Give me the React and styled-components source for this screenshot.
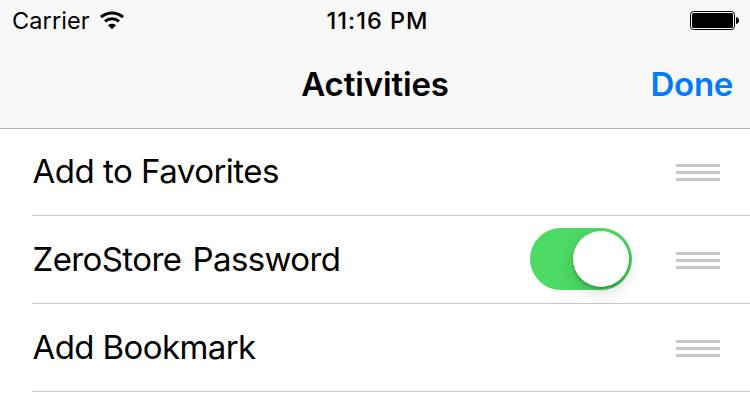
import React from 'react';
import styled, { createGlobalStyle } from 'styled-components';

const GlobalStyle = createGlobalStyle`
  * { box-sizing: border-box; }
  body { margin: 0; background: #fff; color: #000; font-family: Inter, "Liberation Sans", sans-serif; }
`;

const Screen = styled.main`
  width: 750px;
  height: 402px;
  overflow: hidden;
  background: #fff;
`;

const Header = styled.header`
  height: 129px;
  background: #f8f8f8;
  border-bottom: 1px solid #b2b2b2;
`;

const StatusBar = styled.div`
  height: 40px;
  padding: 0 11px 0 12px;
  display: grid;
  grid-template-columns: 1fr auto 1fr;
  align-items: center;
`;

const Carrier = styled.div`
  display: flex;
  align-items: center;
  gap: 9px;
`;

const Label = styled.span`
  display: block;
  white-space: nowrap;
  font-size: ${(p) => p.$size}px;
  font-weight: ${(p) => p.$weight || 400};
  letter-spacing: ${(p) => p.$spacing || 0}px;
  line-height: 42px;
  color: ${(p) => p.$color || '#000'};
`;

const Clock = styled(Label)`
  padding-left: 4px;
`;

const StatusIcon = styled.svg`
  display: block;
  justify-self: end;
  margin-bottom: 1px;
`;

const NavBar = styled.nav`
  height: 88px;
  padding: 0 17px;
  display: grid;
  grid-template-columns: 1fr auto 1fr;
  align-items: center;
`;

const DoneButton = styled.button`
  justify-self: end;
  padding: 0;
  border: 0;
  background: none;
  font-family: inherit;
`;

const List = styled.ul`
  margin: 0;
  padding: 0 0 0 32px;
  list-style: none;
`;

const Row = styled.li`
  height: ${(p) => p.$height}px;
  padding: 0 30px 0 0.5px;
  display: flex;
  align-items: flex-end;
  border-bottom: 1px solid #c8c7cc;
`;

const RowLabel = styled(Label)`
  margin-bottom: 23px;
  word-spacing: ${(p) => p.$wordSpacing || 0}px;
`;

const Switch = styled.button`
  width: 102px;
  height: 62px;
  margin: 0 0 13px auto;
  padding: 3px;
  display: flex;
  justify-content: flex-end;
  border: 0;
  border-radius: 31px;
  background: #4cd964;
`;

const Knob = styled.span`
  width: 56px;
  height: 56px;
  border-radius: 50%;
  background: #fff;
  box-shadow: 0 6px 16px rgba(0, 0, 0, 0.15), 0 2px 3px rgba(0, 0, 0, 0.25);
`;

const Handle = styled.div`
  width: 44px;
  margin-bottom: 34px;
  margin-left: ${(p) => (p.$afterSwitch ? '44px' : 'auto')};
  display: flex;
  flex-direction: column;
  gap: 4px;
`;

const HandleBar = styled.span`
  height: 3px;
  background: #c7c7cc;
`;

const rows = [
  { label: 'Add to Favorites', height: 87, spacing: -0.5 },
  { label: 'ZeroStore Password', height: 88, spacing: -0.6, wordSpacing: 2.5, enabled: true },
  { label: 'Add Bookmark', height: 88, spacing: -0.6 },
];

export default function App() {
  return (
    <Screen>
      <GlobalStyle />
      <Header>
        <StatusBar>
          <Carrier>
            <Label $size={23.5} $spacing={0.1}>Carrier</Label>
            <StatusIcon width="26" height="19" viewBox="0 0 26 19" aria-label="Wi-Fi">
              <path d="M2 6.1C8.2.5 17.8.5 24 6.1M6 10.4c4-3.6 10-3.6 14 0" fill="none" stroke="#000" strokeWidth="3" />
              <path d="M13 18.2l-4-4c2.3-2 5.7-2 8 0z" />
            </StatusIcon>
          </Carrier>
          <Clock $size={23.5} $weight={550} $spacing={1}>11:16 PM</Clock>
          <StatusIcon width="49" height="19" viewBox="0 0 49 19" aria-label="Battery full">
            <rect x=".5" y=".5" width="44" height="18" rx="3" fill="none" stroke="#000" />
            <rect x="2" y="2" width="41" height="15" rx="1.5" />
            <path d="M46 6c4 .5 4 6.5 0 7z" />
          </StatusIcon>
        </StatusBar>
        <NavBar>
          <span />
          <Label $size={33} $weight={600} $spacing={-0.15}>Activities</Label>
          <DoneButton><Label $size={33} $weight={600} $spacing={-0.3} $color="#007aff">Done</Label></DoneButton>
        </NavBar>
      </Header>
      <List>
        {rows.map((row) => (
          <Row key={row.label} $height={row.height}>
            <RowLabel $size={33} $spacing={row.spacing} $wordSpacing={row.wordSpacing}>{row.label}</RowLabel>
            {row.enabled && <Switch role="switch" aria-checked="true" aria-label={row.label}><Knob /></Switch>}
            <Handle $afterSwitch={row.enabled}><HandleBar /><HandleBar /><HandleBar /></Handle>
          </Row>
        ))}
      </List>
    </Screen>
  );
}
